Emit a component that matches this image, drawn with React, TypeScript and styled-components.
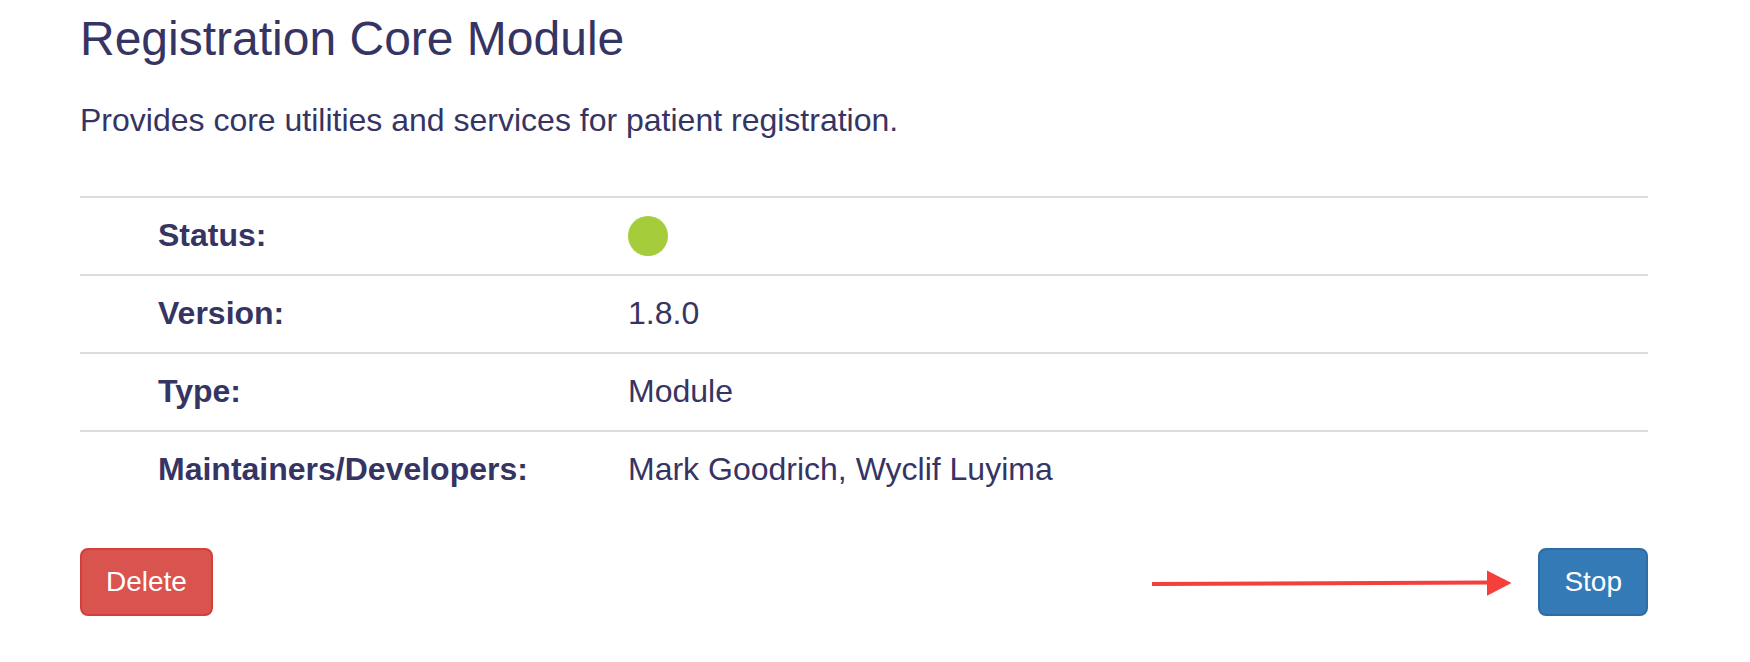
import styled, { createGlobalStyle } from "styled-components"

const GlobalStyle = createGlobalStyle`
    body{
        margin: 0;
        background: #fff;
        font-family: "Liberation Sans", Arial, Helvetica, sans-serif;
        color: #363463;
    }
`

const Page = styled.div`
    width: 1568px;
    padding-left: 80px;
`

const Title = styled.h2`
    margin: 13px 0 0;
    font-size: 48px;
    font-weight: 400;
    line-height: 52.8px;
`

const Description = styled.p`
    margin: 32px 0 0;
    font-size: 32px;
    line-height: 45.7px;
`

const Details = styled.div`
    margin-top: 52px;
`

const Row = styled.div`
    display: grid;
    grid-template-columns: 548px 1fr;
    align-items: center;
    height: 76px;
    border-top: 2px solid #ddd;
    font-size: 32px;
`

const Label = styled.span`
    padding-left: 78px;
    font-weight: 700;
`

const Value = styled.span``

const StatusDot = styled.span<{ $color: string }>`
    display: block;
    width: 40px;
    height: 40px;
    border-radius: 50%;
    background: ${p => p.$color};
`

const Footer = styled.div`
    position: relative;
    display: flex;
    justify-content: space-between;
    margin-top: 40px;
`

const Button = styled.button<{ $bg: string, $border: string }>`
    font-family: inherit;
    font-size: 28px;
    line-height: 40px;
    padding: 12px 24px;
    color: #fff;
    background: ${p => p.$bg};
    border: 2px solid ${p => p.$border};
    border-radius: 8px;
    cursor: pointer;
`

const Arrow = styled.svg`
    position: absolute;
    left: 1070px;
    top: 20px;
`

const rows = [
    { label: "Version:", value: "1.8.0" },
    { label: "Type:", value: "Module" },
    { label: "Maintainers/Developers:", value: "Mark Goodrich, Wyclif Luyima" },
]

const App = () => {
    return(
        <>
            <GlobalStyle />
            <Page>
                <Title>Registration Core Module</Title>
                <Description>Provides core utilities and services for patient registration.</Description>
                <Details>
                    <Row>
                        <Label>Status:</Label>
                        <Value><StatusDot $color="#a5cd3b" /></Value>
                    </Row>
                    {rows.map(r => (
                        <Row key={r.label}>
                            <Label>{r.label}</Label>
                            <Value>{r.value}</Value>
                        </Row>
                    ))}
                </Details>
                <Footer>
                    <Button $bg="#d9534f" $border="#d43f3a">Delete</Button>
                    <Button $bg="#337ab7" $border="#2e6da4">Stop</Button>
                    <Arrow width="364" height="30" viewBox="0 0 364 30">
                        <line x1="2" y1="16" x2="338" y2="14.6" stroke="#f43f3b" strokeWidth="4" />
                        <polygon points="337,2.6 361.5,15 337,27.8" fill="#f43f3b" />
                    </Arrow>
                </Footer>
            </Page>
        </>
    )
}

export default App;
